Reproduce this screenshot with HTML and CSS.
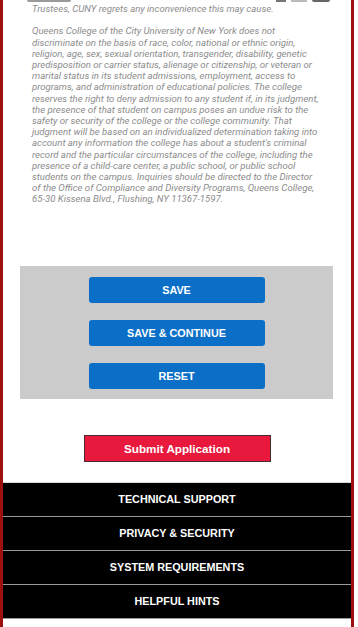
FILE: index.html
```html
<!DOCTYPE html>
<html lang="en">
<head>
    <meta charset="UTF-8">
    <meta name="viewport" content="width=device-width, initial-scale=1.0">
    <title>Application Review</title>
    <link rel="stylesheet" href="styles.css">
</head>
<body>
    <div class="page">
        <!-- Phone status bar, scrolled mostly out of view -->
        <div class="status-bar">
            <span class="clock"></span>
            <span class="status-icons">
                <span class="signal"></span>
                <span class="wifi"></span>
                <span class="battery"></span>
            </span>
        </div>

        <!-- Legal notice (lines broken as on the device) -->
        <div class="notice">
            <p>Trustees, CUNY regrets any inconvenience this may cause.</p>
            <p>Queens College of the City University of New York does not<br>
            discriminate on the basis of race, color, national or ethnic origin,<br>
            religion, age, sex, sexual orientation, transgender, disability, genetic<br>
            predisposition or carrier status, alienage or citizenship, or veteran or<br>
            marital status in its student admissions, employment, access to<br>
            programs, and administration of educational policies. The college<br>
            reserves the right to deny admission to any student if, in its judgment,<br>
            the presence of that student on campus poses an undue risk to the<br>
            safety or security of the college or the college community. That<br>
            judgment will be based on an individualized determination taking into<br>
            account any information the college has about a student's criminal<br>
            record and the particular circumstances of the college, including the<br>
            presence of a child-care center, a public school, or public school<br>
            students on the campus. Inquiries should be directed to the Director<br>
            of the Office of Compliance and Diversity Programs, Queens College,<br>
            65-30 Kissena Blvd., Flushing, NY 11367-1597.</p>
        </div>

        <!-- Form actions -->
        <div class="action-box">
            <button class="action-button">SAVE</button>
            <button class="action-button">SAVE &amp; CONTINUE</button>
            <button class="action-button">RESET</button>
        </div>

        <div class="submit-row">
            <button class="submit-button">Submit Application</button>
        </div>

        <!-- Footer links -->
        <ul class="footer-links">
            <li><a href="#">TECHNICAL SUPPORT</a></li>
            <li><a href="#">PRIVACY &amp; SECURITY</a></li>
            <li><a href="#">SYSTEM REQUIREMENTS</a></li>
            <li><a href="#">HELPFUL HINTS</a></li>
        </ul>
    </div>
</body>
</html>
```

FILE: styles.css
```css
body {
    margin: 0;
    background-color: #fff;
    font-family: "Liberation Sans", Arial, sans-serif;
}

.page {
    position: relative;
    width: 348px;
    min-height: 627px;
    border-left: 3px solid #9e1010;
    border-right: 3px solid #9e1010;
    background-color: #fff;
    overflow: hidden;
}

/* Status bar pokes in at the very top */
.status-bar {
    position: absolute;
    top: -9px;
    left: 24px;
    right: 21px;
    height: 11px;
    display: flex;
    justify-content: space-between;
    align-items: flex-end;
}

.clock {
    width: 44px;
    height: 10px;
    background-color: #9a9a9a;
    border-radius: 2px;
}

.status-icons {
    display: flex;
    align-items: flex-end;
    gap: 5px;
}

.signal {
    width: 10px;
    height: 10px;
    background-color: #777;
}

.wifi {
    width: 16px;
    height: 10px;
    background-color: #bbb;
}

.battery {
    width: 18px;
    height: 10px;
    border-radius: 2px;
    background-color: #666;
}

/* Notice text */
.notice {
    padding: 3px 10px 0 29px;
    font-family: Roboto, "Liberation Sans", sans-serif;
    font-style: italic;
    font-size: 9.6px;
    line-height: 11.2px;
    color: #8c8c8c;
    white-space: nowrap;
}

.notice p {
    margin: 0 0 11.2px 0;
}

/* Gray action box */
.action-box {
    margin: 61px 18px 0 17px;
    padding: 11px 0 10px 0;
    background-color: #cbcbcb;
    display: flex;
    flex-direction: column;
    align-items: center;
    gap: 17px;
}

.action-button {
    width: 176px;
    height: 26px;
    border: none;
    border-radius: 3px;
    background-color: #0b6fc7;
    color: #fff;
    font-family: "Liberation Sans", Arial, sans-serif;
    font-size: 10.8px;
    font-weight: bold;
    cursor: pointer;
}

.submit-row {
    display: flex;
    justify-content: center;
    margin-top: 36px;
}

.submit-button {
    width: 187px;
    height: 27px;
    border: 1px solid #4a2a2e;
    background-color: #e8193c;
    color: #fff;
    font-family: "Liberation Sans", Arial, sans-serif;
    font-size: 11.7px;
    font-weight: bold;
    cursor: pointer;
}

/* Footer */
.footer-links {
    list-style: none;
    margin: 20px 0 0 0;
    padding: 0;
    border-top: 1px solid #d8d8d8;
}

.footer-links li {
    background-color: #000;
    border-bottom: 1px solid #9a9a9a;
}

.footer-links a {
    display: block;
    height: 33px;
    line-height: 33px;
    text-align: center;
    color: #fff;
    text-decoration: none;
    font-size: 10.8px;
    font-weight: bold;
}
```
